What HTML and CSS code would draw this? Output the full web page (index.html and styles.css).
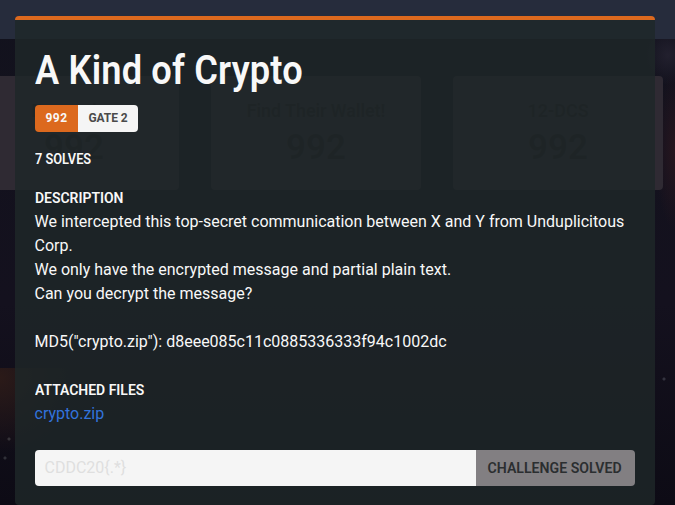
FILE: index.html
```
<!DOCTYPE html>
<html lang="en">
<head>
<meta charset="utf-8">
<title>A Kind of Crypto</title>
<link rel="stylesheet" href="styles.css">
</head>
<body>
<div class="page">
  <div class="navbar"></div>
  <div class="tiles">
    <div class="tile"><div class="tile-name">Encryption</div><div class="tile-score">992</div></div>
    <div class="tile"><div class="tile-name">Find Their Wallet!</div><div class="tile-score">992</div></div>
    <div class="tile"><div class="tile-name">12-DCS</div><div class="tile-score">992</div></div>
  </div>
</div>
<div class="overlay">
  <main class="modal">
    <h1 class="title">A Kind of Crypto</h1>
    <div class="tags"><span class="tag tag-score">992</span><span class="tag tag-gate">GATE 2</span></div>
    <h2 class="heading solves">7 SOLVES</h2>
    <h2 class="heading description">DESCRIPTION</h2>
    <p class="text">We intercepted this top-secret communication between X and Y from Unduplicitous Corp.<br>We only have the encrypted message and partial plain text.<br>Can you decrypt the message?<br><br>MD5("crypto.zip"): d8eee085c11c0885336333f94c1002dc</p>
    <h2 class="heading files">ATTACHED FILES</h2>
    <a class="link">crypto.zip</a>
    <div class="field">
      <div class="flag">CDDC20{.*}</div>
      <div class="button"><span class="button-label">CHALLENGE SOLVED</span></div>
    </div>
  </main>
</div>
</body>
</html>
```
FILE: styles.css
```
* { box-sizing: border-box; }
body { margin: 0; height: 505px; overflow: hidden; font: 16px/24px Roboto, sans-serif; color: #f8f8f8; }
.page {
  height: 505px;
  overflow: hidden;
  background:
    radial-gradient(circle at 0 10px, #2b1a18, transparent 75px) 0 368px / 100% 137px no-repeat,
    radial-gradient(ellipse 20px 80px at 675px 150px, #27161f, transparent),
    radial-gradient(ellipse 26px 30px at 668px 55px, #22202e, transparent),
    radial-gradient(circle at 9px 439px, #393940 0 1px, transparent 2px),
    radial-gradient(circle at 5px 458px, #303038 0 1px, transparent 2px),
    radial-gradient(circle at 664px 379px, #33333f 0 1px, transparent 2px),
    linear-gradient(#12121d, #14111e 60%, #0d0b15);
}
.navbar { height: 39px; background: #262c3c; }
.tiles { display: grid; grid-template-columns: repeat(3, 210px); gap: 32px; margin: 37px 0 0 -31px; }
.tile { height: 114px; padding-top: 21px; border-radius: 4px; background: #2f2a33; color: #1d1a20; text-align: center; font-weight: 600; }
.tile-name { font-size: 18px; line-height: 28px; letter-spacing: -.1px; }
.tile-score { font-size: 35px; line-height: 46px; }
.overlay { position: absolute; inset: 0; padding: 16px 20px 0 15px; }
.modal { height: 489px; padding: 28px 20px 0; border-top: 4px solid #dc691e; border-radius: 4px; background: rgba(30, 39, 40, .82); }
.title { width: max-content; margin: 0; font-size: 40px; line-height: 45px; font-weight: 600; letter-spacing: .2px; transform: scaleX(.905); transform-origin: left; }
.tags { display: flex; width: 103px; height: 27px; margin-top: 12px; border-radius: 4px; overflow: hidden; font-size: 12px; line-height: 27px; font-weight: 700; text-align: center; }
.tag-score { width: 43px; background: #dc691e; letter-spacing: .5px; }
.tag-gate { flex: 1; background: #f5f5f5; color: #4a4a4a; letter-spacing: -.1px; }
.heading { width: max-content; margin: 0; font-size: 15.5px; line-height: 24px; font-weight: 600; letter-spacing: 0; transform: scaleX(.9); transform-origin: left; }
.solves { margin-top: 15px; transform: scaleX(.825); }
.description { margin-top: 15px; }
.text { margin: 0 0 0 -.5px; }
.files { margin-top: 24px; }
.link { display: block; margin-left: -.5px; color: #3273dc; }
.field { display: flex; height: 36px; margin-top: 24px; border-radius: 4px; overflow: hidden; }
.flag { width: 441px; padding-left: 9.5px; line-height: 36px; background: #f5f5f5; color: #dfdfdf; }
.button { display: flex; flex: 1; justify-content: center; background: #827f82; color: #2b2e30; line-height: 36px; }
.button-label { font-size: 15.5px; font-weight: 600; white-space: nowrap; transform: translateX(-1px) scaleX(.91); }
```
